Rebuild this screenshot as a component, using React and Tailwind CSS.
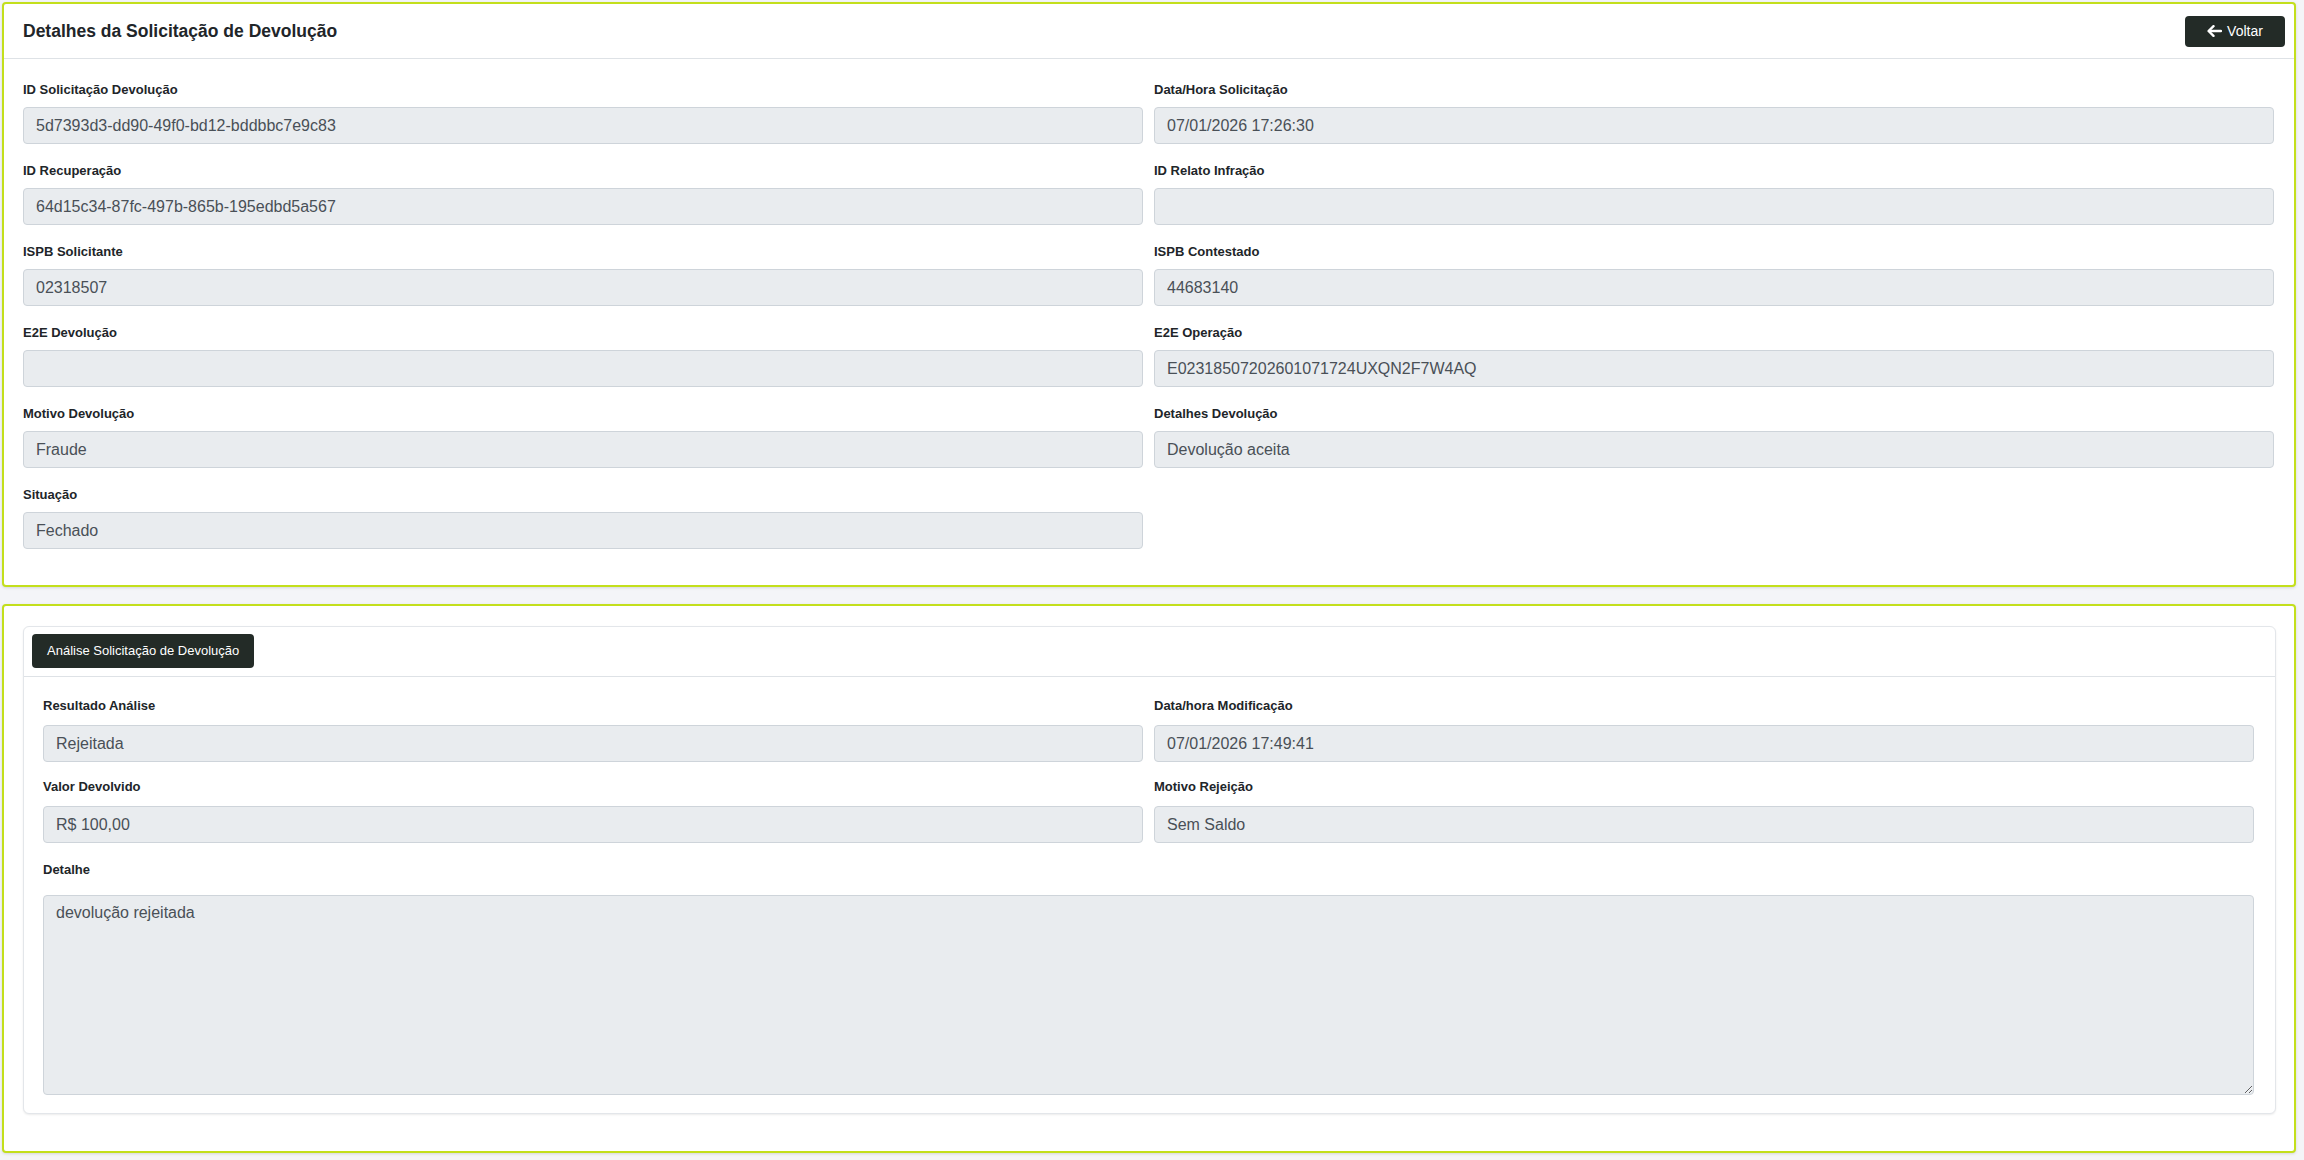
import React from 'react';

const pedido = [
  ['ID Solicitação Devolução', '5d7393d3-dd90-49f0-bd12-bddbbc7e9c83'],
  ['Data/Hora Solicitação', '07/01/2026 17:26:30'],
  ['ID Recuperação', '64d15c34-87fc-497b-865b-195edbd5a567'],
  ['ID Relato Infração', ''],
  ['ISPB Solicitante', '02318507'],
  ['ISPB Contestado', '44683140'],
  ['E2E Devolução', ''],
  ['E2E Operação', 'E02318507202601071724UXQN2F7W4AQ'],
  ['Motivo Devolução', 'Fraude'],
  ['Detalhes Devolução', 'Devolução aceita'],
  ['Situação', 'Fechado'],
];

const analise = [
  ['Resultado Análise', 'Rejeitada'],
  ['Data/hora Modificação', '07/01/2026 17:49:41'],
  ['Valor Devolvido', 'R$ 100,00'],
  ['Motivo Rejeição', 'Sem Saldo'],
];

function Campo({ label, value, gap = 'mb-[9px]' }) {
  return (
    <div className="flex flex-col">
      <label className={`block text-[13px] leading-4 font-bold text-[#212529] ${gap}`}>{label}</label>
      <input
        readOnly
        value={value}
        className="h-[37px] w-full rounded-[4px] border border-[#ced4da] bg-[#e9ecef] px-3 text-[16px] text-[#495057] outline-none"
      />
    </div>
  );
}

function ArrowLeft() {
  return (
    <svg width="15" height="12" viewBox="0 0 15 12" fill="none" stroke="currentColor" strokeWidth="2.4" strokeLinecap="round" strokeLinejoin="round">
      <path d="M14 6H2" />
      <path d="M6.5 1.2L1.6 6l4.9 4.8" />
    </svg>
  );
}

export default function App() {
  return (
    <div
      className="min-h-[1160px] bg-[#f4f5f8] pl-[2px] pr-[8px] pt-[2px]"
      style={{ fontFamily: '"Liberation Sans", Arial, sans-serif' }}
    >
      <div className="rounded-[4px] border-2 border-[#c3df1c] bg-white shadow-[0_1px_3px_rgba(0,0,0,0.12)]">
        <div className="flex h-[55px] items-center justify-between border-b border-[#dee2e6] pl-[19px] pr-[9px]">
          <h1 className="text-[17.5px] font-bold text-[#212529]">Detalhes da Solicitação de Devolução</h1>
          <button className="flex h-[31px] w-[100px] items-center justify-center gap-[5px] rounded-[4px] bg-[#232b27] text-[14px] text-white">
            <ArrowLeft />
            Voltar
          </button>
        </div>
        <div className="grid grid-cols-2 gap-x-[11px] gap-y-[19px] pl-[19px] pr-[20px] pb-[36px] pt-[23px]">
          {pedido.map(([l, v]) => (
            <Campo key={l} label={l} value={v} />
          ))}
        </div>
      </div>

      <div className="mt-[17px] rounded-[4px] border-2 border-[#c3df1c] bg-white pl-[19px] pr-[18px] pt-[20px] pb-[37px] shadow-[0_1px_3px_rgba(0,0,0,0.12)]">
        <div className="rounded-[6px] border border-[#e3e6ea] bg-white shadow-[0_1px_2px_rgba(0,0,0,0.08)]">
          <div className="border-b border-[#dee2e6] px-2 pt-[7px] pb-2">
            <button className="h-[34px] rounded-[4px] bg-[#232b27] px-[15px] text-[13px] text-white">
              Análise Solicitação de Devolução
            </button>
          </div>
          <div className="pl-[19px] pr-[21px] pt-[21px] pb-[18px]">
            <div className="grid grid-cols-2 gap-x-[11px] gap-y-[17px]">
              {analise.map(([l, v]) => (
                <Campo key={l} label={l} value={v} gap="mb-[11px]" />
              ))}
            </div>
            <div className="mt-[19px] flex flex-col">
              <label className="mb-[17px] block text-[13px] leading-4 font-bold text-[#212529]">Detalhe</label>
              <textarea
                readOnly
                value="devolução rejeitada"
                className="h-[200px] w-full rounded-[4px] border border-[#ced4da] bg-[#e9ecef] px-3 pt-[5px] pb-[6px] text-[16px] leading-6 text-[#495057] outline-none"
              />
            </div>
          </div>
        </div>
      </div>
    </div>
  );
}
